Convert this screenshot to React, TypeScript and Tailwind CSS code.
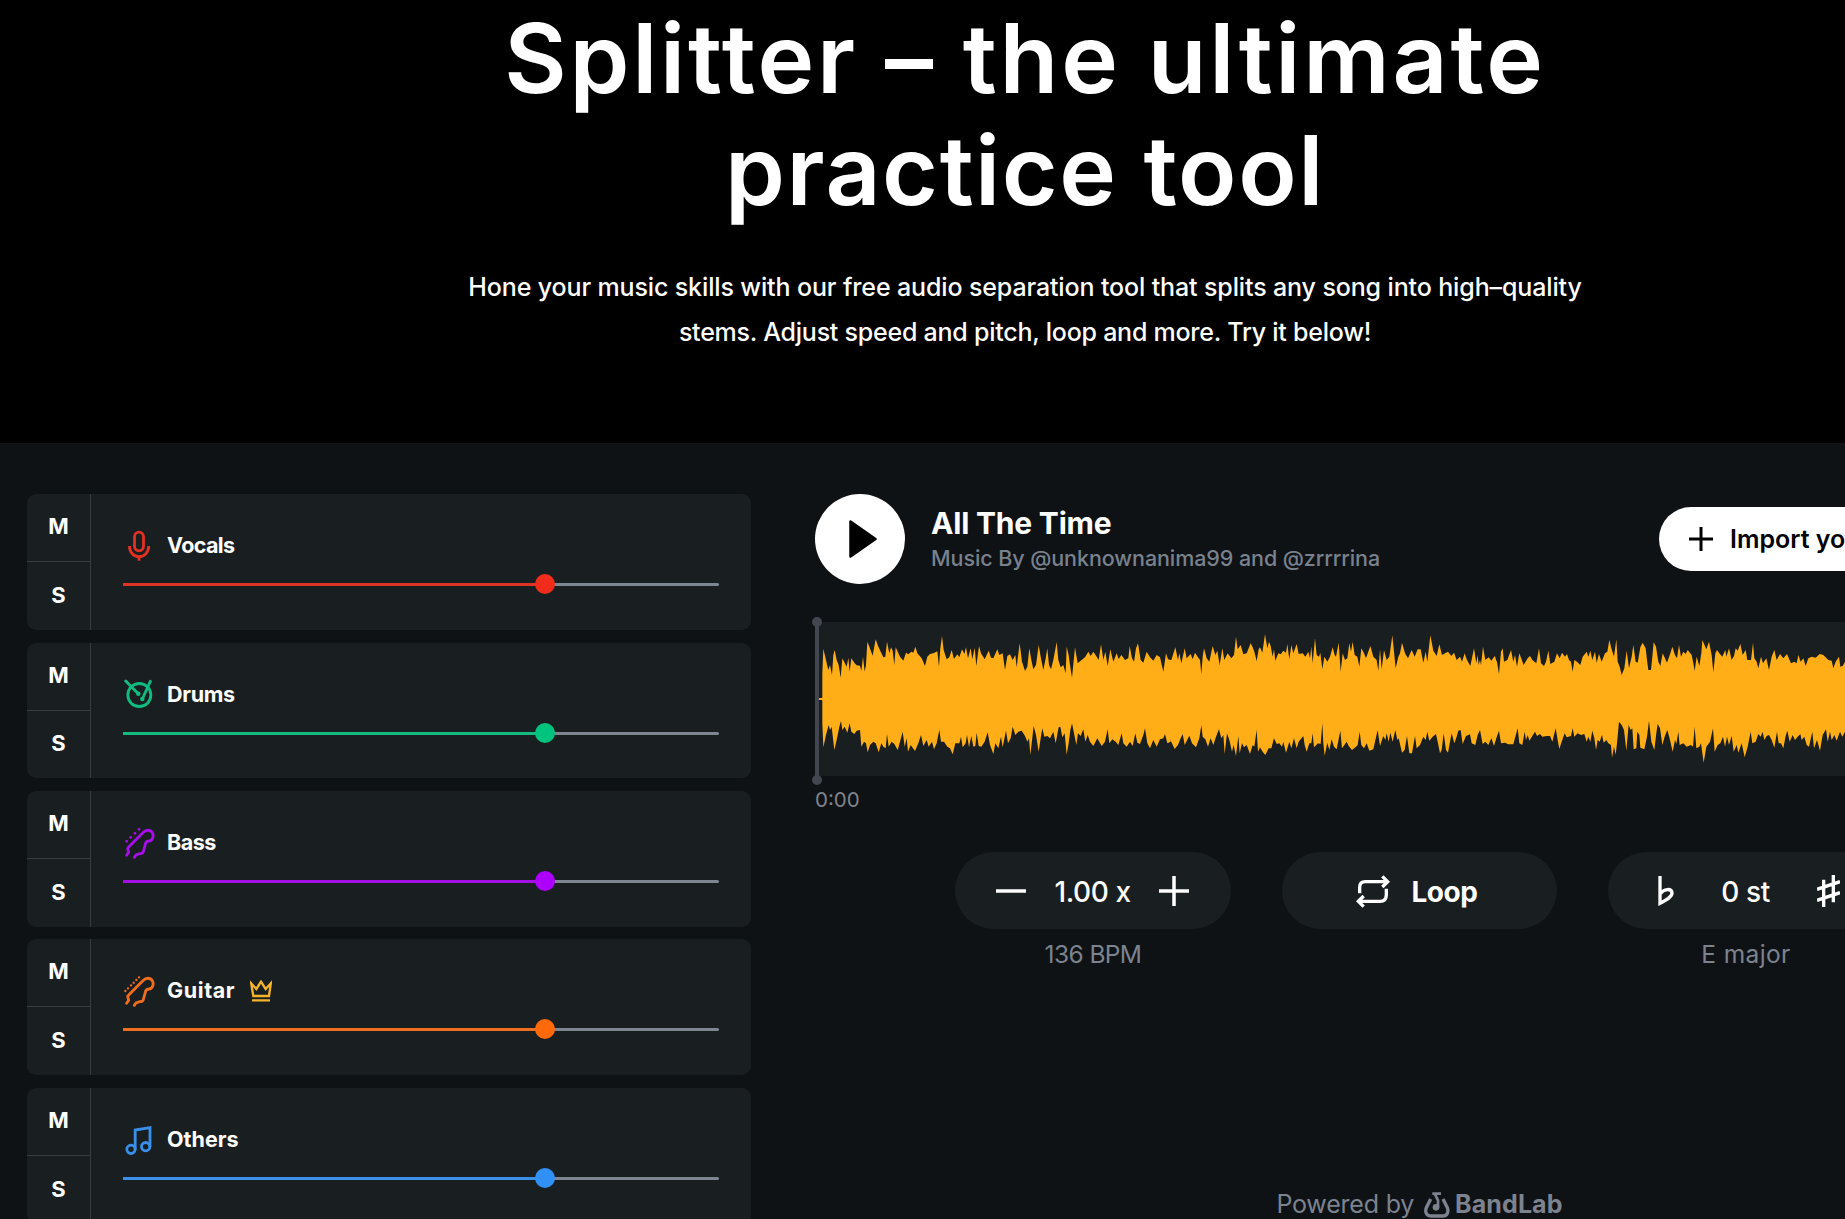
import { ReactElement, ReactNode } from "react";

type Track = {
  name: string;
  icon: ReactNode;
  text: string;
  fill: string;
  thumb: string;
  tracking: string;
  premium?: boolean;
};

function TrackIcon({ children }: { children: ReactNode }): ReactElement {
  return (
    <svg
      className="w-8 h-8"
      viewBox="0 0 96 96"
      fill="none"
      stroke="currentColor"
      strokeWidth="8.5"
    >
      {children}
    </svg>
  );
}

const neck =
  "M11 85 L17 76 L14 64 L20 57 L61 16 C68 8 82 7 88 17 C94 28 88 41 78 42 C70 42 68 45 67 52 L61 74 C59 79 55 80 50 80 L39 84 L34 91";

const tracks: Track[] = [
  {
    name: "Vocals",
    icon: (
      <TrackIcon>
        <rect x="34.5" y="6.5" width="27" height="56" rx="13.5" />
        <path d="M19.5 48 C19.5 67 32 80 48 80 S77 67 77 48 M48 80 V92" />
      </TrackIcon>
    ),
    text: "text-[#e23123]",
    fill: "bg-[#df3325]",
    thumb: "bg-[#f22c1a]",
    tracking: "tracking-[-0.6px]",
  },
  {
    name: "Drums",
    icon: (
      <TrackIcon>
        <circle cx="49" cy="48" r="34.5" />
        <path d="M8 6 L46 44 M82 7 L58 60" strokeLinecap="round" />
        <circle cx="46" cy="44" r="2.5" />
        <circle cx="58" cy="60" r="2.5" />
      </TrackIcon>
    ),
    text: "text-[#10bc80]",
    fill: "bg-[#14ba80]",
    thumb: "bg-[#00c47d]",
    tracking: "tracking-[-0.3px]",
  },
  {
    name: "Bass",
    icon: (
      <TrackIcon>
        <path d={neck} strokeLinecap="round" />
        <path
          d="M11 43h.1 M23 31h.1 M36 19h.1 M48 7h.1"
          strokeLinecap="round"
        />
      </TrackIcon>
    ),
    text: "text-[#a60eea]",
    fill: "bg-[#a410e4]",
    thumb: "bg-[#ae00ff]",
    tracking: "tracking-[-0.5px]",
  },
  {
    name: "Guitar",
    icon: (
      <TrackIcon>
        <path d={neck} strokeLinecap="round" />
        <path
          d="M7 48h.1 M15 40h.1 M24 31h.1 M32 23h.1 M40 15h.1 M48 7h.1"
          strokeLinecap="round"
          strokeWidth="7"
        />
      </TrackIcon>
    ),
    text: "text-[#f06d1c]",
    fill: "bg-[#ed6e1f]",
    thumb: "bg-[#ff690a]",
    tracking: "tracking-[0.6px]",
    premium: true,
  },
  {
    name: "Others",
    icon: (
      <TrackIcon>
        <circle cx="24" cy="76" r="12.5" />
        <circle cx="68" cy="68" r="12.5" />
        <path d="M36.5 76 V18 L81 11 V68" />
      </TrackIcon>
    ),
    text: "text-[#3990ea]",
    fill: "bg-[#3b90e7]",
    thumb: "bg-[#3090f5]",
    tracking: "tracking-[0px]",
  },
];

// outline of the wave in three pieces, upper and lower edge
const wave = [
  {
    shift: "translate(-21 -36)",
    mid: 267,
    from: 37,
    to: 1082,
    top: "37,190 40,116 48,150 55,180 60,165 66,195 70,135 74,120 80,150 86,165 92,203 97,145 104,158 110,170 115,143 119,185 124,145 134,160 140,166 150,167 154,183 159,140 164,185 168,165 172,95 178,110 188,137 197,88 205,110 220,142 226,140 231,95 238,130 243,112 248,122 253,165 257,112 270,140 280,152 288,128 295,133 304,125 310,128 316,110 322,130 335,145 345,168 352,140 360,132 370,130 382,124 387,170 391,115 396,78 401,120 410,148 418,142 425,120 432,147 442,133 448,142 456,118 463,132 468,112 474,145 482,115 487,148 494,113 499,168 507,108 513,130 524,148 536,122 543,143 550,145 562,118 568,135 578,130 585,180 592,138 600,133 608,150 616,135 620,172 629,100 636,155 645,183 652,170 658,115 664,150 670,178 678,165 686,105 692,140 700,180 707,145 712,115 717,165 723,178 730,150 740,96 745,150 752,172 760,165 767,190 770,110 776,135 780,165 786,203 795,112 803,160 812,152 825,142 835,125 842,138 850,125 860,140 866,150 873,103 880,150 886,125 893,168 901,118 910,155 920,130 926,147 934,135 945,150 955,145 959,108 966,145 972,155 978,115 984,100 992,150 1000,158 1010,125 1020,142 1030,152 1040,135 1050,142 1060,185 1068,130 1074,148 1082,150",
    bottom:
      "37,340 40,412 48,375 56,345 60,360 65,350 73,420 80,390 88,350 93,333 97,360 104,350 112,368 119,340 124,365 133,372 140,362 150,360 154,410 162,395 168,400 173,427 180,405 190,395 197,400 206,427 214,400 220,410 227,415 231,372 236,410 245,395 253,402 263,420 270,395 278,365 284,410 290,385 294,425 302,405 315,423 325,400 333,375 340,408 350,390 356,410 366,395 372,418 380,400 388,360 393,395 402,395 412,410 420,415 428,433 436,400 448,400 453,380 458,412 467,400 471,375 477,412 484,378 490,410 496,408 500,368 506,408 514,410 524,395 533,367 540,405 550,432 556,400 565,415 573,380 578,412 588,362 594,400 602,385 608,350 616,375 625,365 635,362 645,378 652,395 657,385 661,435 668,375 671,348 678,375 686,425 692,385 697,355 703,380 712,378 720,385 730,365 737,400 746,352 751,350 757,382 764,370 770,434 776,400 781,360 786,340 792,370 799,405 804,370 812,378 820,358 826,395 833,375 840,395 850,408 862,385 875,408 885,395 893,358 898,400 907,388 917,395 925,405 935,370 940,400 950,410 960,395 968,408 976,370 982,398 990,402 1000,375 1005,355 1012,400 1020,415 1030,390 1040,410 1050,388 1060,385 1065,372 1072,400 1082,395",
  },
  {
    shift: "translate(1029 -36)",
    mid: 267,
    from: 30,
    to: 1007,
    top: "30,150 34,150 46,112 54,150 58,130 64,160 74,115 80,145 92,132 98,148 105,128 116,145 120,150 124,193 128,140 132,115 140,145 148,155 158,108 166,135 172,122 179,165 187,115 193,150 203,130 214,145 222,135 228,80 233,118 242,105 250,133 260,130 272,100 278,112 283,125 290,153 296,118 300,112 307,128 315,73 322,115 327,95 332,108 338,140 342,118 346,152 355,130 362,133 370,122 378,128 382,102 388,148 394,105 400,130 410,102 416,132 428,130 436,140 445,125 450,145 454,110 458,160 465,85 470,135 477,140 481,128 487,178 493,140 502,155 510,140 518,112 524,135 528,140 536,98 542,185 548,130 555,150 562,145 568,100 573,125 578,95 584,135 592,140 598,170 604,115 612,130 618,145 631,108 640,140 650,150 655,182 660,118 665,178 672,120 680,150 688,140 697,76 703,135 707,175 715,140 720,130 726,98 735,130 744,145 755,120 764,140 773,118 782,118 790,158 797,125 802,155 811,76 820,122 830,138 838,103 846,135 855,130 864,125 874,138 882,128 890,150 900,140 906,155 914,130 920,148 931,168 942,115 949,160 953,135 956,165 960,150 963,165 969,110 976,150 986,142 994,152 1004,138 1007,145",
    bottom:
      "30,388 44,417 54,405 62,385 68,372 74,405 88,377 96,400 108,412 118,385 124,345 128,380 136,388 144,410 152,385 160,405 168,380 177,358 184,385 190,375 194,432 201,370 208,390 216,425 221,405 228,438 235,378 239,430 246,400 252,412 260,405 270,432 278,405 283,410 290,360 294,425 300,412 308,425 316,435 326,415 334,415 342,385 350,402 358,400 366,410 370,395 378,428 388,395 394,415 402,385 410,415 416,395 430,378 434,405 440,425 448,400 454,400 458,370 462,412 474,400 482,402 487,340 490,400 494,437 502,398 508,420 515,388 522,410 530,418 541,362 546,415 560,395 566,408 576,420 588,410 593,405 599,365 604,405 612,415 620,400 628,422 640,418 653,360 660,408 670,378 676,390 680,370 686,395 691,368 698,395 706,360 712,390 716,385 726,428 734,420 741,378 748,430 756,430 765,378 770,415 780,405 790,380 797,390 802,365 808,392 818,380 828,372 834,400 840,430 845,420 851,370 858,420 864,428 870,395 875,370 883,400 890,380 895,362 902,360 908,402 918,378 930,373 935,400 946,405 953,375 960,360 968,402 976,395 985,405 994,385 1002,408 1007,390",
  },
  {
    shift: "translate(2034 -426)",
    mid: 657,
    from: 0,
    to: 1050,
    top: "0,535 6,545 12,583 18,515 23,505 27,545 37,540 48,510 55,545 60,525 66,560 73,520 86,555 98,535 105,528 112,540 124,550 132,505 138,550 147,558 153,545 160,512 166,552 178,545 186,520 194,535 201,518 210,530 216,522 222,540 228,545 233,575 238,540 246,545 256,555 263,530 275,515 280,530 286,512 292,540 300,515 305,548 312,522 320,545 330,520 337,515 343,480 349,505 357,530 364,478 368,545 374,560 380,585 388,565 395,512 402,565 410,530 415,495 422,545 428,548 436,502 443,488 452,505 456,540 460,570 468,570 472,530 476,487 483,500 490,545 496,558 503,520 516,548 526,520 532,500 540,525 546,535 552,495 558,530 565,515 572,522 578,510 590,525 596,555 599,573 605,530 613,558 619,520 622,480 634,508 642,485 650,525 655,577 661,520 666,510 673,520 682,530 691,510 694,530 702,505 710,540 717,528 722,505 728,512 736,492 743,525 752,510 757,540 768,540 774,488 778,535 785,545 790,565 798,530 804,550 814,535 822,570 830,530 838,510 845,540 855,522 865,535 876,522 888,550 898,545 905,550 910,525 917,545 925,535 932,558 940,535 950,530 962,533 974,522 985,525 1000,540 1010,542 1015,565 1022,545 1032,530 1036,560 1043,558 1050,545",
    bottom:
      "0,785 12,752 18,790 30,788 40,793 55,793 68,745 73,790 82,795 89,755 93,780 98,765 103,782 112,768 120,755 126,768 135,762 142,770 155,768 165,768 172,785 182,745 188,780 193,807 200,785 209,760 215,772 228,768 233,745 238,770 248,760 258,765 268,762 275,785 280,770 286,785 292,752 298,775 303,810 308,780 314,785 321,765 326,788 334,780 340,790 348,795 351,833 357,800 362,824 366,790 372,725 380,735 387,750 394,812 401,735 407,750 412,745 416,808 424,805 427,755 433,765 436,803 448,808 456,770 462,722 469,785 478,810 484,760 488,732 495,745 502,795 509,770 517,750 525,780 533,815 540,780 544,792 550,755 554,795 565,790 575,800 588,795 594,800 599,740 604,805 613,800 618,790 626,848 634,800 645,785 654,745 659,815 668,795 676,790 684,770 690,800 696,770 702,795 710,768 716,815 725,795 730,818 740,790 749,832 758,800 767,755 772,790 782,785 790,762 797,770 803,755 808,780 815,768 822,765 830,780 838,803 846,755 851,790 858,790 865,805 872,768 877,752 884,785 893,765 900,780 908,770 916,762 920,780 928,770 935,795 942,800 952,755 957,805 966,780 975,812 983,765 993,748 998,785 1005,755 1010,780 1018,765 1025,782 1035,755 1042,770 1050,755",
  },
];

function TrackCard({ track }: { track: Track }): ReactElement {
  return (
    <div className="flex h-[135.6px] shrink-0 rounded-[9px] bg-[#191e20] overflow-hidden">
      <div className="w-16 flex flex-col border-r border-[#373c3f] text-[22px] font-bold">
        <button className="h-[68px] border-b border-[#373c3f] pb-[2px]">
          M
        </button>
        <button className="flex-1 pb-px">S</button>
      </div>
      <div className="flex-1 pl-8 pr-8 pt-9">
        <div className="flex items-center h-8">
          <span className={track.text}>{track.icon}</span>
          <span
            className={`ml-3 pb-[2px] text-[21.5px] font-bold leading-[30px] ${track.tracking}`}
          >
            {track.name}
          </span>
          {track.premium && (
            <svg
              className="w-[22px] h-[22px] ml-[15px]"
              viewBox="0 0 66 66"
              fill="none"
              stroke="#f5b32a"
              strokeWidth="7"
            >
              <path d="M3.5 10 L10 48 H57 L62.5 10 L47 27 L33 5 L19 27 Z" />
              <path d="M6 61 H60" />
            </svg>
          )}
        </div>
        <div className="relative mt-[21px] h-[3px] bg-[#7e8692] rounded-r-sm">
          <div className={`h-[3px] w-[422px] ${track.fill}`} />
          <div
            className={`absolute left-[412px] -top-[9px] w-5 h-5 rounded-full ${track.thumb}`}
          />
        </div>
      </div>
    </div>
  );
}

function Waveform(): ReactElement {
  return (
    <div className="relative h-[154px] bg-[#191e20]">
      <svg
        className="w-[1028px] h-[154px]"
        viewBox="0 0 3084 462"
        fill="#ffae17"
      >
        <rect x="6" y="228" width="14" height="6" />
        {wave.map((part) => (
          <g key={part.shift} transform={part.shift}>
            <polygon
              points={`${part.from},${part.mid + 5} ${part.top} ${part.to},${part.mid + 5}`}
            />
            <polygon
              points={`${part.from},${part.mid - 5} ${part.bottom} ${part.to},${part.mid - 5}`}
            />
          </g>
        ))}
      </svg>
      <div className="absolute -left-[2px] top-0 w-1 h-[158px] bg-[#42464f]" />
      <div className="absolute -left-[5px] -top-[5px] w-[10px] h-[10px] rounded-full bg-[#42464f]" />
      <div className="absolute -left-[5px] top-[153px] w-[10px] h-[10px] rounded-full bg-[#42464f]" />
    </div>
  );
}

export default function App(): ReactElement {
  return (
    <div className="w-full h-[1219px] overflow-hidden bg-[#0e1215] text-white font-['Inter',sans-serif]">
      <header className="h-[443px] bg-black pt-[2px] pl-[205px] text-center whitespace-nowrap">
        <h1 className="text-[96px] leading-[112px] font-semibold">
          <span className="block tracking-[2.8px]">Splitter – the ultimate</span>
          <span className="block tracking-[1.6px]">practice tool</span>
        </h1>
        <p className="mt-[39px] text-[25px] leading-[45px] font-medium">
          <span className="block tracking-[-0.13px]">
            Hone your music skills with our free audio separation tool that
            splits any song into high–quality
          </span>
          <span className="block tracking-[-0.24px]">
            stems. Adjust speed and pitch, loop and more. Try it below!
          </span>
        </p>
      </header>

      <main className="flex h-[776px] pt-[51px] pl-[27px]">
        <section className="w-[724px] shrink-0 flex flex-col gap-[12.8px] pt-[0.2px]">
          {tracks.map((track) => (
            <TrackCard key={track.name} track={track} />
          ))}
        </section>

        <section className="ml-16 w-[1209px] shrink-0 whitespace-nowrap flex flex-col">
          <div className="flex items-center h-[90px]">
            <button className="w-[90px] h-[90px] rounded-full bg-white shrink-0">
              <svg className="ml-[34px] w-7 h-[38px]" viewBox="0 0 28 38">
                <path
                  d="M1.5 1.5 L26.5 19 L1.5 36.5 Z"
                  stroke="#000"
                  strokeWidth="2.5"
                  strokeLinejoin="round"
                />
              </svg>
            </button>
            <div className="ml-[26px] w-[728px] pt-[3px]">
              <p className="text-[30px] leading-[35px] font-bold tracking-[-0.2px]">
                All The Time
              </p>
              <p className="text-[21.5px] leading-[34px] text-[#79818d] font-medium tracking-[-0.08px]">
                Music By @unknownanima99 and @zrrrrina
              </p>
            </div>
            <button className="flex items-center h-16 px-[30px] rounded-full bg-white text-black text-[25px] font-semibold">
              <svg
                className="w-6 h-6 mr-[17px]"
                viewBox="0 0 24 24"
                stroke="#000"
                strokeWidth="3"
              >
                <path d="M0 12 H24 M12 0 V24" />
              </svg>
              <span className="pt-[2px]">Import your song</span>
            </button>
          </div>

          <div className="mt-[38px] ml-[2px]">
            <Waveform />
          </div>
          <p className="mt-2 h-8 leading-8 text-[20.5px] text-[#80858d]">
            0:00
          </p>

          <div className="mt-9 ml-[140px] flex gap-[51px]">
            <div className="w-[276px] text-center">
              <div className="h-[77px] pr-px rounded-full bg-[#191e20] flex items-center justify-center text-[28px] font-medium">
                <svg
                  className="w-[30px] h-[30px]"
                  viewBox="0 0 30 30"
                  stroke="#fff"
                  strokeWidth="3.5"
                >
                  <path d="M0 15 H30" />
                </svg>
                <span className="w-[133px] pt-[3px] tracking-[-0.4px]">
                  1.00 x
                </span>
                <svg
                  className="w-[30px] h-[30px]"
                  viewBox="0 0 30 30"
                  stroke="#fff"
                  strokeWidth="3.5"
                >
                  <path d="M0 15 H30 M15 0 V30" />
                </svg>
              </div>
              <p className="mt-[7px] leading-9 text-[24.5px] text-[#7c838f] tracking-[-0.6px]">
                136 BPM
              </p>
            </div>

            <div className="w-[275px] h-[77px] pr-[5px] rounded-full bg-[#191e20] flex items-center justify-center gap-[21px] text-[28px] font-bold tracking-[-0.4px]">
              <svg
                className="w-[34px] h-[34px]"
                viewBox="0 0 102 102"
                fill="none"
                stroke="#fff"
                strokeWidth="10"
              >
                <path d="M11 58 V40 C11 28 16 23 28 23 H92 M79 7 L95 23 L79 39" />
                <path d="M91 44 V62 C91 76 85 82 72 82 H10 M23 66 L7 82 L23 98" />
              </svg>
              <span className="pt-[3px]">Loop</span>
            </div>

            <div className="w-[276px] text-center">
              <div className="h-[77px] rounded-full bg-[#191e20] flex items-center pl-[50px] text-[28px] font-medium">
                <svg
                  className="w-4 h-[30px]"
                  viewBox="0 0 48 90"
                  fill="none"
                  stroke="#fff"
                  strokeWidth="10"
                >
                  <path d="M6 0 V82 C27 71 43 62 42 50 C40 36 18 38 6 54" />
                </svg>
                <span className="w-[143px] pt-[3px] tracking-[-0.4px]">
                  0 st
                </span>
                <svg
                  className="w-[23px] h-8"
                  viewBox="0 0 69 96"
                  fill="none"
                  stroke="#fff"
                  strokeWidth="10"
                >
                  <path d="M20 14 V96 M49 0 V82 M0 43 L69 20 M0 76 L69 53" />
                </svg>
              </div>
              <p className="mt-[7px] leading-9 text-[24.5px] text-[#7c838f] tracking-[0.4px]">
                E major
              </p>
            </div>
          </div>

          <div className="mt-auto mb-[-4px] flex items-center self-center h-9 text-[25px] text-[#7c838f]">
            <span className="tracking-[-0.2px]">Powered by</span>
            <svg
              className="w-[26px] h-[26px] ml-[10px] mr-[5px]"
              viewBox="0 0 78 78"
              fill="none"
              stroke="currentColor"
              strokeWidth="10"
            >
              <path d="M20 21 L7 47 C2 61 8 72 20 72 H56 C69 72 75 61 70 47 L57 21" />
              <path d="M25 5 H51 M32 5 L42 25 V46" strokeWidth="8" />
              <circle cx="36" cy="46" r="10" fill="currentColor" stroke="none" />
            </svg>
            <span className="font-bold tracking-[0.1px]">BandLab</span>
          </div>
        </section>
      </main>
    </div>
  );
}
